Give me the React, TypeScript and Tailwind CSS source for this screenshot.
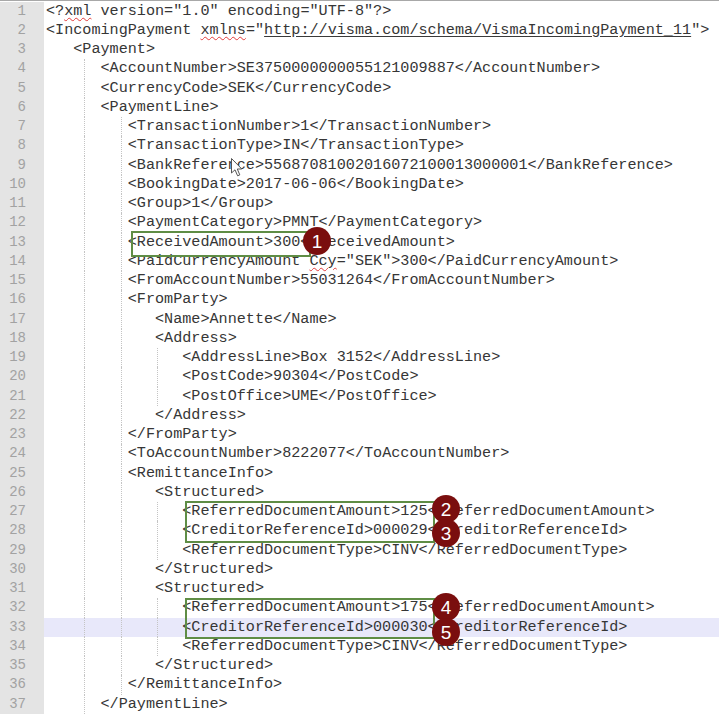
type Part = string | { t: string; s: "wavy" | "link" };
type Line = { lvl: number; parts: Part[] };

const lines: Line[] = [
  { lvl: 0, parts: ["<?", { t: "xml", s: "wavy" }, ' version="1.0" encoding="UTF-8"?>'] },
  {
    lvl: 0,
    parts: [
      "<IncomingPayment ",
      { t: "xmlns", s: "wavy" },
      '="',
      { t: "http://visma.com/schema/VismaIncomingPayment_11", s: "link" },
      '">',
    ],
  },
  { lvl: 1, parts: ["<Payment>"] },
  { lvl: 2, parts: ["<AccountNumber>SE3750000000055121009887</AccountNumber>"] },
  { lvl: 2, parts: ["<CurrencyCode>SEK</CurrencyCode>"] },
  { lvl: 2, parts: ["<PaymentLine>"] },
  { lvl: 3, parts: ["<TransactionNumber>1</TransactionNumber>"] },
  { lvl: 3, parts: ["<TransactionType>IN</TransactionType>"] },
  { lvl: 3, parts: ["<BankReference>55687081002016072100013000001</BankReference>"] },
  { lvl: 3, parts: ["<BookingDate>2017-06-06</BookingDate>"] },
  { lvl: 3, parts: ["<Group>1</Group>"] },
  { lvl: 3, parts: ["<PaymentCategory>PMNT</PaymentCategory>"] },
  { lvl: 3, parts: ["<ReceivedAmount>300</ReceivedAmount>"] },
  { lvl: 3, parts: ["<PaidCurrencyAmount ", { t: "Ccy", s: "wavy" }, '="SEK">300</PaidCurrencyAmount>'] },
  { lvl: 3, parts: ["<FromAccountNumber>55031264</FromAccountNumber>"] },
  { lvl: 3, parts: ["<FromParty>"] },
  { lvl: 4, parts: ["<Name>Annette</Name>"] },
  { lvl: 4, parts: ["<Address>"] },
  { lvl: 5, parts: ["<AddressLine>Box 3152</AddressLine>"] },
  { lvl: 5, parts: ["<PostCode>90304</PostCode>"] },
  { lvl: 5, parts: ["<PostOffice>UME</PostOffice>"] },
  { lvl: 4, parts: ["</Address>"] },
  { lvl: 3, parts: ["</FromParty>"] },
  { lvl: 3, parts: ["<ToAccountNumber>8222077</ToAccountNumber>"] },
  { lvl: 3, parts: ["<RemittanceInfo>"] },
  { lvl: 4, parts: ["<Structured>"] },
  { lvl: 5, parts: ["<ReferredDocumentAmount>125</ReferredDocumentAmount>"] },
  { lvl: 5, parts: ["<CreditorReferenceId>000029</CreditorReferenceId>"] },
  { lvl: 5, parts: ["<ReferredDocumentType>CINV</ReferredDocumentType>"] },
  { lvl: 4, parts: ["</Structured>"] },
  { lvl: 4, parts: ["<Structured>"] },
  { lvl: 5, parts: ["<ReferredDocumentAmount>175</ReferredDocumentAmount>"] },
  { lvl: 5, parts: ["<CreditorReferenceId>000030</CreditorReferenceId>"] },
  { lvl: 5, parts: ["<ReferredDocumentType>CINV</ReferredDocumentType>"] },
  { lvl: 4, parts: ["</Structured>"] },
  { lvl: 3, parts: ["</RemittanceInfo>"] },
  { lvl: 2, parts: ["</PaymentLine>"] },
];

const HIGHLIGHT = 33;

// leading whitespace, split at the 4-char tab stops where the guides sit
function Indent({ n }: { n: number }) {
  if (n === 0) return null;
  const bounds = [0];
  for (let g = 4; g < n; g += 4) bounds.push(g);
  bounds.push(n);
  const count = bounds.length - 1;
  return (
    <>
      {bounds.slice(0, count).map((b, i) => {
        const w = bounds[i + 1] - b;
        let adj = 0;
        if (count > 1 && i === 0) adj = 2;
        if (count > 1 && i === count - 1) adj -= 2;
        return (
          <div
            key={i}
            className={
              i === 0
                ? "shrink-0"
                : "shrink-0 border-l border-dotted border-[#c4c4c4]"
            }
            style={{ width: `calc(${w}ch + ${adj}px)` }}
          />
        );
      })}
    </>
  );
}

function Text({ parts }: { parts: Part[] }) {
  return (
    <span className="whitespace-pre">
      {parts.map((p, i) => {
        if (typeof p === "string") return <span key={i}>{p}</span>;
        if (p.s === "link")
          return (
            <span key={i} className="underline decoration-[#3a3a3a] underline-offset-2">
              {p.t}
            </span>
          );
        return (
          <span
            key={i}
            className="underline decoration-wavy decoration-[#e23b3b] decoration-1 underline-offset-2"
          >
            {p.t}
          </span>
        );
      })}
    </span>
  );
}

function Marker({ n, x, y }: { n: number; x: number; y: number }) {
  return (
    <div
      className="absolute w-[28px] h-[28px] rounded-full bg-[#7a0e0e] text-white flex items-center justify-center text-[19px] leading-none font-['Liberation_Sans',Arial,sans-serif]"
      style={{ left: x - 14, top: y - 14 }}
    >
      {n}
    </div>
  );
}

export default function App() {
  return (
    <div className="relative w-[719px] h-[715px] overflow-hidden bg-white border-t border-[#a8a8a8] font-['Liberation_Mono','Courier_New',monospace]">
      <div className="flex flex-col pt-[0.5px]">
        {lines.map((l, i) => (
          <div key={i} className="flex h-[19.25px] shrink-0">
            <div className="w-[44px] shrink-0 bg-[#e4e4e4] text-right pr-[18px] text-[14px] leading-[19.25px] text-[#a2a2a2]">
              {i + 1}
            </div>
            <div
              className={
                i + 1 === HIGHLIGHT
                  ? "flex flex-1 pl-[2px] bg-[#e8e8fa] text-[15.15px] leading-[19.25px] text-[#363636]"
                  : "flex flex-1 pl-[2px] text-[15.15px] leading-[19.25px] text-[#363636]"
              }
            >
              <Indent n={l.lvl * 3} />
              <Text parts={l.parts} />
            </div>
          </div>
        ))}
      </div>

      {/* annotation boxes */}
      <div className="absolute left-[131px] top-[230px] w-[180px] h-[26px] border-2 border-[#5f8d45]" />
      <div className="absolute left-[185px] top-[500px] w-[250px] h-[42px] border-2 border-[#5f8d45]" />
      <div className="absolute left-[185px] top-[597px] w-[250px] h-[41px] border-2 border-[#5f8d45]" />

      <Marker n={1} x={317} y={240} />
      <Marker n={2} x={446} y={508} />
      <Marker n={3} x={446} y={532} />
      <Marker n={4} x={446} y={606} />
      <Marker n={5} x={446} y={631} />

      {/* mouse pointer */}
      <svg
        className="absolute left-[231px] top-[157px]"
        width="12"
        height="19"
        viewBox="0 0 12 19"
      >
        <path
          d="M0.5 0.5 L0.5 15 L4 11.8 L6.6 17.8 L8.8 16.9 L6.3 11 L10.8 11 Z"
          fill="#fff"
          stroke="#555"
          strokeWidth="1"
          strokeLinejoin="round"
        />
      </svg>
    </div>
  );
}
